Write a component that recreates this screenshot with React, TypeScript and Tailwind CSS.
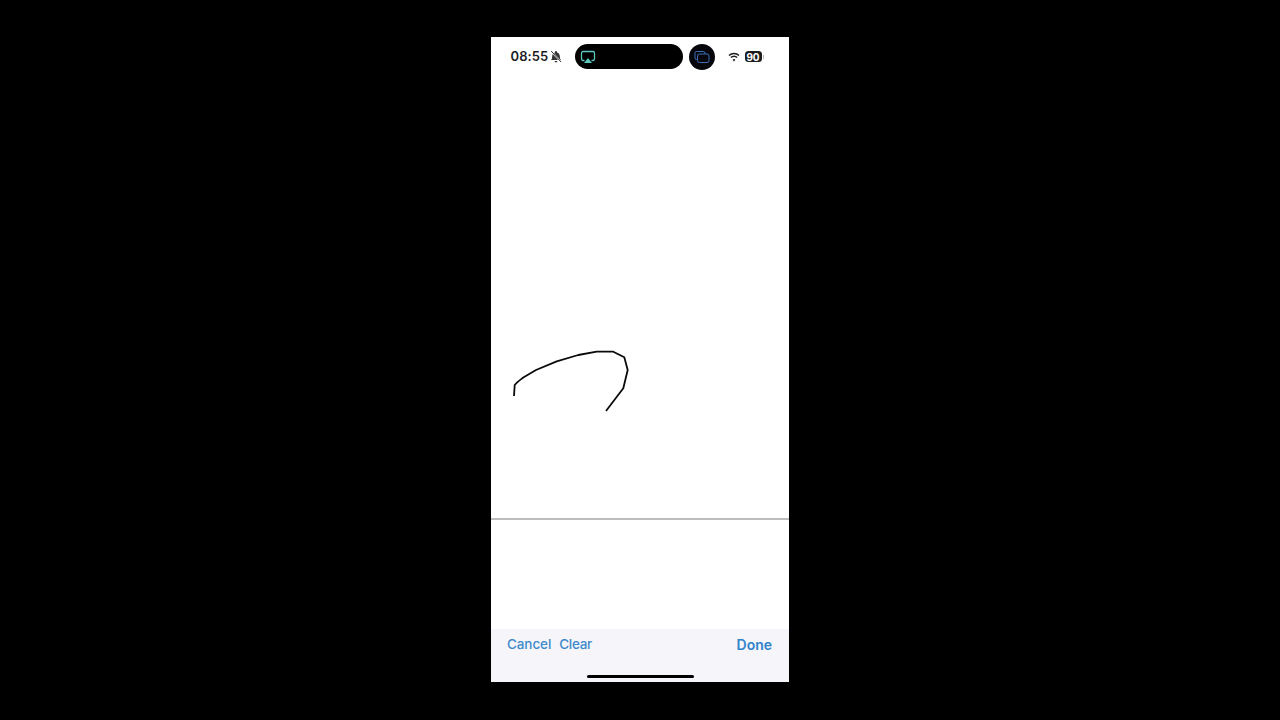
const font = { fontFamily: '"Inter","Liberation Sans",sans-serif' };

export default function App() {
  return (
    <div className="h-screen bg-black flex justify-center overflow-hidden" style={font}>
      <div className="w-[298px] h-[645px] mt-[37px] bg-white flex flex-col">
        {/* status bar */}
        <div className="h-[39px] flex items-center pl-[19.5px] shrink-0">
          <span className="text-[13px] font-semibold text-[#1c1c1e] w-[39.5px] tracking-[0.1px]">08:55</span>
          <svg className="shrink-0" width="12" height="13" viewBox="0 0 12 13" fill="#333">
            <path d="M6 1a1 1 0 0 1 1 1v.4c1.7.5 2.7 1.9 2.8 3.6l.2 2.4 1 1.6H1l1-1.6.2-2.4C2.3 4.300 3.300 2.900 5 2.400V2a1 1 0 0 1 1-1z" />
            <path d="M4.600 11h2.800A1.400 1.400 0 0 1 4.600 11z" />
            <path d="M1.500 1.500l9.500 10.500" stroke="#fff" strokeWidth="1.800" />
            <path d="M1.200 1l9.800 11" stroke="#333" strokeWidth="1" />
          </svg>
          <div className="ml-[12.5px] w-[108px] h-[25px] rounded-full bg-black flex items-center pl-[5px] shrink-0">
            <svg width="16" height="16" viewBox="0 0 16 16" fill="none">
              <path d="M4.500 11.500H3.200A1.700 1.700 0 0 1 1.500 9.800V4.200A1.700 1.700 0 0 1 3.200 2.500h9.600a1.700 1.700 0 0 1 1.700 1.700v5.600a1.700 1.700 0 0 1-1.700 1.700h-1.300" stroke="#5cc9bd" strokeWidth="1.300" />
              <path d="M8 9l4 5H4z" fill="#5cc9bd" />
            </svg>
          </div>
          <div className="ml-[6px] w-[26px] h-[26px] rounded-full bg-[#05070d] flex items-center justify-center shrink-0">
            <svg width="16" height="14" viewBox="0 0 16 14" fill="none" stroke="#3f6fb5" strokeWidth="1">
              <path d="M3.200 9.500H2.600A1.600 1.600 0 0 1 1 7.900V3.100A1.600 1.600 0 0 1 2.600 1.500h6.800A1.600 1.600 0 0 1 11 3.100v.8" />
              <rect x="3.500" y="4" width="11.500" height="8.500" rx="2" />
            </svg>
          </div>
          <svg className="ml-[13px] shrink-0" width="12" height="10" viewBox="0 0 12 10" fill="none" stroke="#1c1c1e" strokeWidth="1.500">
            <path d="M1 3.600a7 7 0 0 1 10 0" />
            <path d="M2.900 5.600a4.300 4.300 0 0 1 6.200 0" />
            <path d="M6 9.400 4.600 7.700a2 2 0 0 1 2.800 0z" fill="#1c1c1e" stroke="none" />
          </svg>
          <div className="ml-[5px] w-[17px] h-[11px] rounded-[3.500px] bg-[#1c1c1e] flex items-center justify-center shrink-0">
            <span className="text-[10px] leading-none font-bold text-white">90</span>
          </div>
          <div className="w-[1px] h-[4px] ml-[1px] bg-[#bbb] shrink-0" />
        </div>

        {/* drawing area */}
        <div className="h-[442px] shrink-0">
          <svg className="w-full h-full block" viewBox="491 76 298 442" fill="none">
            <path
              d="M514 396 L514.700 385 C517 382 520 380 523.300 377.500 L536 370 L556.700 361.300 L578.300 355 L596.700 351.700 L613.300 351.700 L624.300 357.300 L627.700 370 L623.300 388.300 L606 411"
              stroke="#0a0a0a"
              strokeWidth="1.800"
              strokeLinejoin="round"
            />
          </svg>
        </div>
        <div className="h-[2px] bg-[#bdbdbd] shrink-0" />

        <div className="h-[109px] shrink-0 bg-white" />

        {/* toolbar */}
        <div className="flex-1 bg-[#f6f5f9] relative">
          <div className="flex items-center h-[30px] pl-[16px] pr-[17px] text-[13.5px] text-[#3f8acb]">
            <span className="font-medium tracking-[-0.1px]">Cancel</span>
            <span className="ml-[8px] font-medium tracking-[-0.3px]">Clear</span>
            <span className="ml-auto font-semibold text-[14px] text-[#2f83cb]">Done</span>
          </div>
          <div className="absolute bottom-[4px] left-[96px] w-[107px] h-[3px] rounded-full bg-black" />
        </div>
      </div>
    </div>
  );
}
